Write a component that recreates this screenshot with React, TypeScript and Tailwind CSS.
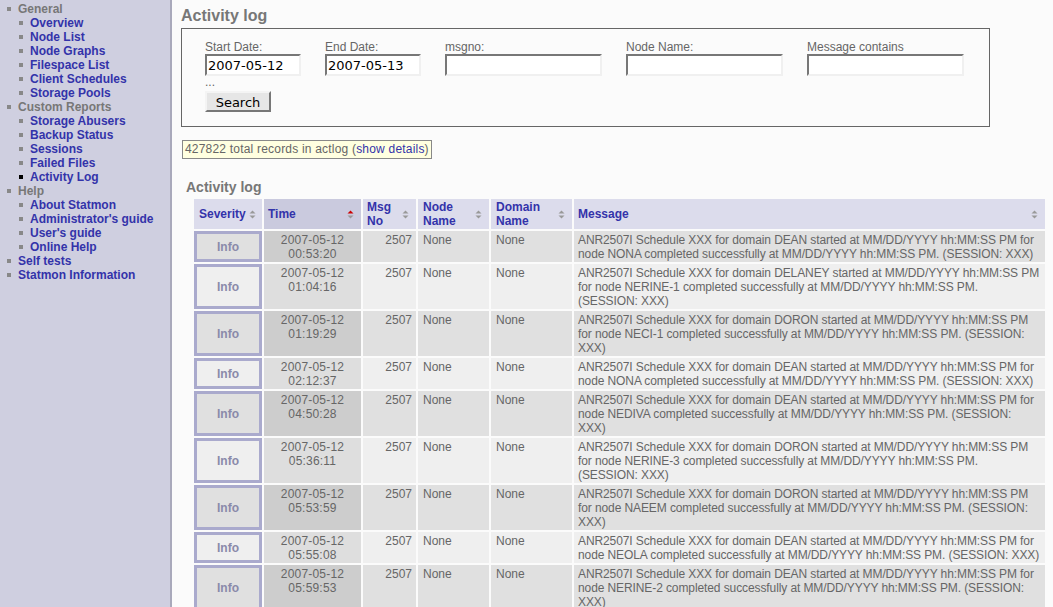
import React from "react";

type MenuItem = { label: string; link?: boolean; level: number; current?: boolean };

const menu: MenuItem[] = [
  { label: "General", level: 0 },
  { label: "Overview", level: 1, link: true },
  { label: "Node List", level: 1, link: true },
  { label: "Node Graphs", level: 1, link: true },
  { label: "Filespace List", level: 1, link: true },
  { label: "Client Schedules", level: 1, link: true },
  { label: "Storage Pools", level: 1, link: true },
  { label: "Custom Reports", level: 0 },
  { label: "Storage Abusers", level: 1, link: true },
  { label: "Backup Status", level: 1, link: true },
  { label: "Sessions", level: 1, link: true },
  { label: "Failed Files", level: 1, link: true },
  { label: "Activity Log", level: 1, link: true, current: true },
  { label: "Help", level: 0 },
  { label: "About Statmon", level: 1, link: true },
  { label: "Administrator's guide", level: 1, link: true },
  { label: "User's guide", level: 1, link: true },
  { label: "Online Help", level: 1, link: true },
  { label: "Self tests", level: 0, link: true },
  { label: "Statmon Information", level: 0, link: true },
];

const S = "ANR2507I Schedule XXX for domain";
const T = "started at MM/DD/YYYY hh:MM:SS PM";
const C = "completed successfully at MM/DD/YYYY hh:MM:SS PM.";

// line breaks as the table wraps them in the original page
const rows = [
  { time: "00:53:20", lines: [`${S} DEAN ${T} for`, `node NONA ${C} (SESSION: XXX)`] },
  { time: "01:04:16", lines: [`${S} DELANEY ${T}`, `for node NERINE-1 ${C}`, "(SESSION: XXX)"] },
  { time: "01:19:29", lines: [`${S} DORON ${T}`, `for node NECI-1 ${C} (SESSION:`, "XXX)"] },
  { time: "02:12:37", lines: [`${S} DEAN ${T} for`, `node NONA ${C} (SESSION: XXX)`] },
  { time: "04:50:28", lines: [`${S} DEAN ${T} for`, `node NEDIVA ${C} (SESSION:`, "XXX)"] },
  { time: "05:36:11", lines: [`${S} DORON ${T}`, `for node NERINE-3 ${C}`, "(SESSION: XXX)"] },
  { time: "05:53:59", lines: [`${S} DORON ${T}`, `for node NAEEM ${C} (SESSION:`, "XXX)"] },
  { time: "05:55:08", lines: [`${S} DEAN ${T} for`, `node NEOLA ${C} (SESSION: XXX)`] },
  { time: "05:59:53", lines: [`${S} DEAN ${T} for`, `node NERINE-2 ${C} (SESSION:`, "XXX)"] },
];

function SortIcon({ up }: { up?: boolean }) {
  return (
    <svg width="7" height="9" viewBox="0 0 7 9" className="inline-block shrink-0">
      <path d="M3.5 0.5 L6.5 3.5 L0.5 3.5 Z" fill={up ? "#cc0000" : "#999999"} />
      <path d="M0.5 5.5 L6.5 5.5 L3.5 8.5 Z" fill="#999999" />
    </svg>
  );
}

function Field({ label, value, w }: { label: string; value?: string; w: string }) {
  return (
    <div className="flex flex-col">
      <span className="text-[12px] leading-[14px] text-[#666]">{label}</span>
      <input
        readOnly
        value={value ?? ""}
        className={`${w} h-[22px] bg-white border-2 border-t-[#777] border-l-[#777] border-b-[#f0f0f0] border-r-[#f0f0f0] px-[1px] text-[13px] text-black outline-none`}
        style={{ fontFamily: '"DejaVu Sans", sans-serif' }}
      />
    </div>
  );
}

export default function App() {
  return (
    <div
      className="flex h-[607px] overflow-hidden bg-[#fbfbfb]"
      style={{ fontFamily: '"Liberation Sans", Arial, sans-serif' }}
    >
      <aside className="w-[172px] shrink-0 bg-[#cfcfe0] border-r-2 border-[#a9a9bb] pt-[2px]">
        <ul>
          {menu.map((m) => (
            <li
              key={m.label}
              className={`flex items-center h-[14px] text-[12px] leading-[14px] font-bold ${m.level === 0 ? "pl-[7px]" : "pl-[19px]"}`}
            >
              <span className={`w-[4px] h-[4px] mr-[7px] ${m.current ? "bg-black" : "bg-[#888]"}`} />
              <span className={m.link ? "text-[#3333aa]" : "text-[#777]"}>{m.label}</span>
            </li>
          ))}
        </ul>
      </aside>

      <main className="flex-1 pl-[9px] pt-[6px]">
        <h1 className="text-[16px] leading-[19px] font-bold text-[#777]">Activity log</h1>

        <div className="mt-[3px] w-[809px] border border-[#666] pl-[23px] pt-[11px] pb-[12px]">
          <div className="flex gap-[24px]">
            <Field label="Start Date:" value="2007-05-12" w="w-[96px]" />
            <Field label="End Date:" value="2007-05-13" w="w-[96px]" />
            <Field label="msgno:" w="w-[157px]" />
            <Field label="Node Name:" w="w-[157px]" />
            <Field label="Message contains" w="w-[157px]" />
          </div>
          <div className="text-[12px] leading-[14px] text-[#666] -mt-[1px]">...</div>
          <button
            className="mt-[2px] w-[66px] h-[21px] bg-[#e6e6e6] border-2 border-t-[#f4f4f4] border-l-[#f4f4f4] border-b-[#777] border-r-[#777] text-[13px] text-black"
            style={{ fontFamily: '"DejaVu Sans", sans-serif' }}
          >
            Search
          </button>
        </div>

        <div className="mt-[13px] inline-block ml-[1px] border border-[#888] bg-[#ffffe0] px-[2px] h-[19px] text-[12px] leading-[17px] tracking-[0.2px] text-[#666]">
          427822 total records in actlog (<span className="text-[#3333aa]">show details</span>)
        </div>

        <h2 className="mt-[19px] ml-[5px] text-[14px] leading-[16px] font-bold text-[#777]">Activity log</h2>

        <table className="mt-[2px] ml-[11px] border-separate border-spacing-[2px] text-[12px] leading-[14px] text-[#666] table-fixed w-[855px]">
          <colgroup>
            <col className="w-[68px]" />
            <col className="w-[97px]" />
            <col className="w-[53px]" />
            <col className="w-[71px]" />
            <col className="w-[81px]" />
            <col className="w-[471px]" />
          </colgroup>
          <thead>
            <tr className="h-[30px] text-[#3333aa] font-bold text-left">
              <th className="bg-[#dcdcec] pl-[5px] align-middle">
                <span className="flex items-center gap-[3px]">Severity <SortIcon /></span>
              </th>
              <th className="bg-[#cacade] pl-[4px] pr-[7px] align-middle">
                <span className="flex items-center justify-between">Time <SortIcon up /></span>
              </th>
              <th className="bg-[#dcdcec] pl-[4px] pr-[7px] align-middle">
                <span className="flex items-center justify-between">
                  <span>Msg<br />No</span>
                  <SortIcon />
                </span>
              </th>
              <th className="bg-[#dcdcec] pl-[5px] pr-[7px] align-middle">
                <span className="flex items-center justify-between">
                  <span>Node<br />Name</span>
                  <SortIcon />
                </span>
              </th>
              <th className="bg-[#dcdcec] pl-[5px] pr-[7px] align-middle">
                <span className="flex items-center justify-between">
                  <span>Domain<br />Name</span>
                  <SortIcon />
                </span>
              </th>
              <th className="bg-[#dcdcec] pl-[4px] pr-[7px] align-middle">
                <span className="flex items-center justify-between">Message <SortIcon /></span>
              </th>
            </tr>
          </thead>
          <tbody>
            {rows.map((r, i) => {
              const odd = i % 2 === 0;
              const bg = odd ? "bg-[#e0e0e0]" : "bg-[#efefef]";
              const timeBg = odd ? "bg-[#cdcdcd]" : "bg-[#dedede]";
              return (
                <tr key={r.time}>
                  <td className={`${bg} border-[3px] border-[#aaaacd] text-center align-middle font-bold text-[#8a8aaa]`}>Info</td>
                  <td className={`${timeBg} text-center align-top pt-[2px] pb-[1px] tracking-[0.2px]`}>
                    2007-05-12<br />{r.time}
                  </td>
                  <td className={`${bg} text-right align-top pt-[2px] pb-[1px] pr-[4px]`}>2507</td>
                  <td className={`${bg} align-top pt-[2px] pb-[1px] pl-[5px]`}>None</td>
                  <td className={`${bg} align-top pt-[2px] pb-[1px] pl-[5px]`}>None</td>
                  <td className={`${bg} align-top pt-[2px] pb-[1px] pl-[4px] overflow-hidden whitespace-nowrap tracking-[-0.1px]`}>
                    {r.lines.map((l) => (
                      <div key={l}>{l}</div>
                    ))}
                  </td>
                </tr>
              );
            })}
          </tbody>
        </table>
      </main>
    </div>
  );
}
